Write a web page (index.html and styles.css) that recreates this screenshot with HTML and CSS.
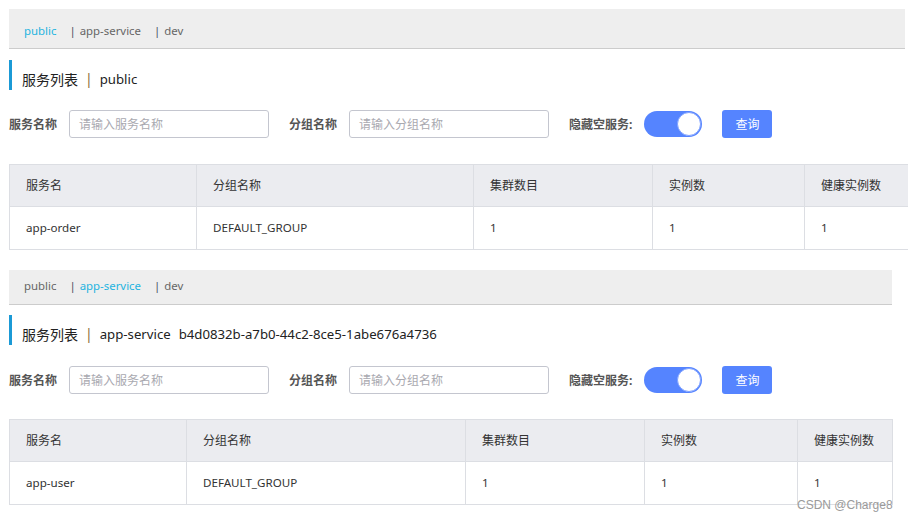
FILE: index.html
```html
<!DOCTYPE html>
<html lang="zh-CN">
<head>
<meta charset="utf-8">
<title>服务列表</title>
<link rel="stylesheet" href="styles.css">
</head>
<body>
<div class="page">
  <section class="block block-1">
    <div class="tabs tabs-1">
      <span class="tab active">public</span>
      <span class="sep">|</span><span class="tab">app-service</span>
      <span class="sep">|</span><span class="tab">dev</span>
    </div>
    <div class="title">
      <span>服务列表</span><span class="title-sep">|</span><span class="latin">public</span>
    </div>
    <div class="form">
      <label class="lbl">服务名称</label>
      <div class="input"><span class="ph">请输入服务名称</span></div>
      <label class="lbl lbl-gap">分组名称</label>
      <div class="input"><span class="ph">请输入分组名称</span></div>
      <label class="lbl lbl-gap">隐藏空服务:</label>
      <div class="switch"><span class="knob"></span></div>
      <button class="btn">查询</button>
    </div>
    <div class="tbl tbl-1">
      <div class="th">服务名</div>
      <div class="th">分组名称</div>
      <div class="th">集群数目</div>
      <div class="th">实例数</div>
      <div class="th">健康实例数</div>
      <div class="td">app-order</div>
      <div class="td">DEFAULT_GROUP</div>
      <div class="td">1</div>
      <div class="td">1</div>
      <div class="td">1</div>
    </div>
  </section>

  <section class="block block-2">
    <div class="tabs tabs-2">
      <span class="tab">public</span>
      <span class="sep">|</span><span class="tab active">app-service</span>
      <span class="sep">|</span><span class="tab">dev</span>
    </div>
    <div class="title title-2">
      <span>服务列表</span><span class="title-sep">|</span><span class="latin">app-service</span><span class="latin ns-id">b4d0832b-a7b0-44c2-8ce5-1abe676a4736</span>
    </div>
    <div class="form form-2">
      <label class="lbl">服务名称</label>
      <div class="input"><span class="ph">请输入服务名称</span></div>
      <label class="lbl lbl-gap">分组名称</label>
      <div class="input"><span class="ph">请输入分组名称</span></div>
      <label class="lbl lbl-gap">隐藏空服务:</label>
      <div class="switch"><span class="knob"></span></div>
      <button class="btn">查询</button>
    </div>
    <div class="tbl tbl-2">
      <div class="th">服务名</div>
      <div class="th">分组名称</div>
      <div class="th">集群数目</div>
      <div class="th">实例数</div>
      <div class="th">健康实例数</div>
      <div class="td">app-user</div>
      <div class="td">DEFAULT_GROUP</div>
      <div class="td">1</div>
      <div class="td">1</div>
      <div class="td">1</div>
    </div>
  </section>

  <div class="watermark">CSDN @Charge8</div>
</div>
</body>
</html>
```

FILE: styles.css
```css
* { box-sizing: border-box; }

html, body {
  margin: 0;
  padding: 0;
  background: #fff;
  overflow: hidden;
}

body {
  font-family: "Noto Sans", "Noto Sans CJK SC", sans-serif;
  font-size: 12px;
  color: #333;
  width: 908px;
  height: 522px;
}

.page {
  position: relative;
  padding: 9px 0 0 9px;
  width: 908px;
  height: 522px;
}

.block-1 { width: 896px; }
.block-2 { width: 883px; margin-top: 20px; }

/* namespace tabs */
.tabs {
  display: flex;
  align-items: center;
  background: #eeeeee;
  border-bottom: 1px solid #cccccc;
  padding-left: 15px;
  color: #666;
  font-size: 11.4px;
}
.tabs-1 { height: 40px; padding-top: 3px; }
.tabs-2 { height: 35px; padding-bottom: 4px; }

.tab { color: #666; }
.tab.active { color: #1fb4e0; }
.sep { color: #4a5060; margin: 0 4px 0 13px; }

/* title */
.title {
  display: flex;
  align-items: center;
  height: 30px;
  margin-top: 11px;
  border-left: 3px solid #1b9ad6;
  padding-left: 10px;
  padding-top: 7px;
  font-size: 14px;
  color: #222;
}
.title-2 { margin-top: 10px; }
.title-sep { color: #8a6a36; margin: 0 7px 0 7px; }
.latin { font-size: 13.2px; }
.ns-id { margin-left: 8px; }

/* form */
.form {
  display: flex;
  align-items: center;
  height: 28px;
  margin-top: 20px;
}
.form-2 { margin-top: 21px; }

.lbl {
  font-weight: bold;
  color: #555;
  font-size: 12px;
  margin-right: 12px;
}
.lbl-gap { margin-left: 20px; }

.input {
  width: 200px;
  height: 28px;
  border: 1px solid #c4c6cf;
  border-radius: 3px;
  display: flex;
  align-items: center;
  padding-left: 9px;
}
.ph { color: #a9a9b0; font-size: 12px; }

.switch {
  width: 58px;
  height: 26px;
  border-radius: 13px;
  background: #5584ff;
  display: flex;
  justify-content: flex-end;
  align-items: center;
  padding: 1px;
}
.knob {
  width: 24px;
  height: 24px;
  border-radius: 50%;
  background: #fff;
  border: 1px solid #7fa2ff;
}

.btn {
  margin-left: 20px;
  width: 50px;
  height: 28px;
  border: none;
  border-radius: 3px;
  background: #5584ff;
  color: #fff;
  font-family: "Noto Sans", "Noto Sans CJK SC", sans-serif;
  font-size: 12px;
  padding: 0;
}

/* tables */
.tbl {
  display: grid;
  border-top: 1px solid #dcdee3;
  border-left: 1px solid #dcdee3;
  margin-top: 26px;
}
.tbl-1 {
  grid-template-columns: 187px 277px 179px 152px 110px;
  width: 906px;
}
.tbl-2 {
  grid-template-columns: 177px 279px 179px 153px 95px;
  width: 884px;
  margin-top: 25px;
}

.th, .td {
  border-right: 1px solid #dcdee3;
  border-bottom: 1px solid #dcdee3;
  padding: 0 16px;
  white-space: nowrap;
  font-size: 12px;
  color: #333;
}
.th {
  background: #ebecf0;
  height: 42px;
  line-height: 41px;
}
.td {
  background: #fff;
  height: 43px;
  line-height: 42px;
  font-size: 11.6px;
}

.watermark {
  position: absolute;
  left: 797px;
  top: 498px;
  font-family: "Liberation Sans", sans-serif;
  font-size: 12px;
  color: #9a9a9a;
}
```
